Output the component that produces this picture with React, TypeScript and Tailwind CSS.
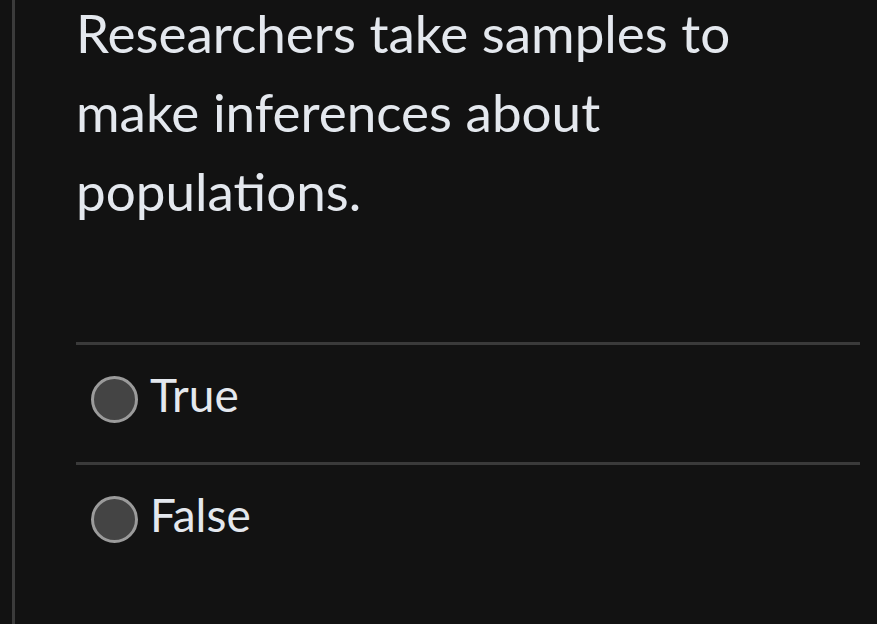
export default function App() {
  const options = ['True', 'False']
  return (
    <div className="h-[624px] w-[877px] overflow-hidden bg-[#121212] font-['Lato',sans-serif] text-[#e4e8ee]">
      <div className="ml-[12px] flex h-full border-l-[3px] border-[#3b3b3b]">
        <div className="flex-1 pl-[61px] pr-[17px]">
          <p className="-mt-[7px] max-w-[700px] text-[53px] leading-[79px]">
            Researchers take samples to make inferences about populations.
          </p>
          <div className="mt-[112px] border-t-[3px] border-[#3a3a3a]">
            {options.map((opt, i) => (
              <div
                key={opt}
                className={`flex h-[120px] items-start gap-[12px] pl-[15px] pt-[31px] ${i === 0 ? 'border-b-[3px] border-[#3a3a3a]' : ''}`}
              >
                <span className="h-[47px] w-[47px] shrink-0 rounded-full border-[3px] border-[#9b9b9b] bg-[#444444]" />
                <span className="-mt-[5px] text-[46px] leading-[47px]">{opt}</span>
              </div>
            ))}
          </div>
        </div>
      </div>
    </div>
  )
}
